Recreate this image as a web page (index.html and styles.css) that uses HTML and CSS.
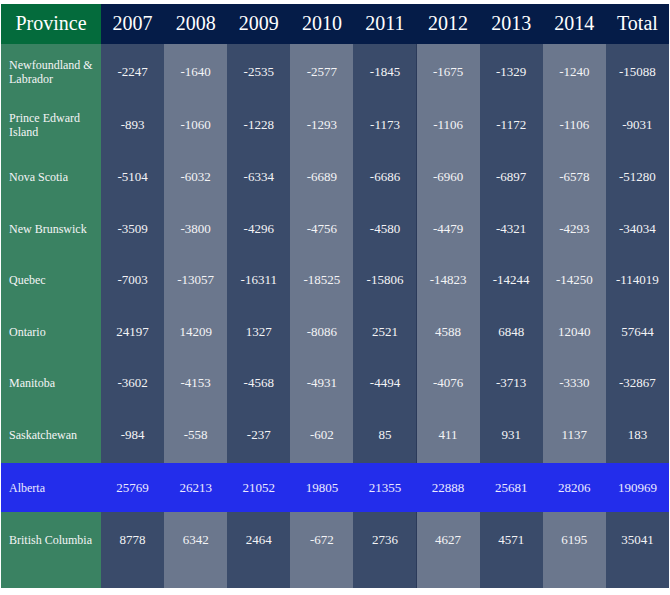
FILE: index.html
```html
<!DOCTYPE html>
<html lang="en">
<head>
<meta charset="utf-8">
<title>Interprovincial migration</title>
<link rel="stylesheet" href="styles.css">
</head>
<body>
<div class="table">
  <div class="row head">
    <div class="cell prov">Province</div>
    <div class="cell">2007</div><div class="cell">2008</div><div class="cell">2009</div><div class="cell">2010</div><div class="cell">2011</div><div class="cell">2012</div><div class="cell">2013</div><div class="cell">2014</div><div class="cell">Total</div>
  </div>
  <div class="row">
    <div class="cell prov"><span>Newfoundland &amp; Labrador</span></div>
    <div class="cell"><span>-2247</span></div><div class="cell"><span>-1640</span></div><div class="cell"><span>-2535</span></div><div class="cell"><span>-2577</span></div><div class="cell"><span>-1845</span></div><div class="cell"><span>-1675</span></div><div class="cell"><span>-1329</span></div><div class="cell"><span>-1240</span></div><div class="cell"><span>-15088</span></div>
  </div>
  <div class="row">
    <div class="cell prov"><span>Prince Edward Island</span></div>
    <div class="cell"><span>-893</span></div><div class="cell"><span>-1060</span></div><div class="cell"><span>-1228</span></div><div class="cell"><span>-1293</span></div><div class="cell"><span>-1173</span></div><div class="cell"><span>-1106</span></div><div class="cell"><span>-1172</span></div><div class="cell"><span>-1106</span></div><div class="cell"><span>-9031</span></div>
  </div>
  <div class="row">
    <div class="cell prov"><span>Nova Scotia</span></div>
    <div class="cell"><span>-5104</span></div><div class="cell"><span>-6032</span></div><div class="cell"><span>-6334</span></div><div class="cell"><span>-6689</span></div><div class="cell"><span>-6686</span></div><div class="cell"><span>-6960</span></div><div class="cell"><span>-6897</span></div><div class="cell"><span>-6578</span></div><div class="cell"><span>-51280</span></div>
  </div>
  <div class="row">
    <div class="cell prov"><span>New Brunswick</span></div>
    <div class="cell"><span>-3509</span></div><div class="cell"><span>-3800</span></div><div class="cell"><span>-4296</span></div><div class="cell"><span>-4756</span></div><div class="cell"><span>-4580</span></div><div class="cell"><span>-4479</span></div><div class="cell"><span>-4321</span></div><div class="cell"><span>-4293</span></div><div class="cell"><span>-34034</span></div>
  </div>
  <div class="row">
    <div class="cell prov"><span>Quebec</span></div>
    <div class="cell"><span>-7003</span></div><div class="cell"><span>-13057</span></div><div class="cell"><span>-16311</span></div><div class="cell"><span>-18525</span></div><div class="cell"><span>-15806</span></div><div class="cell"><span>-14823</span></div><div class="cell"><span>-14244</span></div><div class="cell"><span>-14250</span></div><div class="cell"><span>-114019</span></div>
  </div>
  <div class="row">
    <div class="cell prov"><span>Ontario</span></div>
    <div class="cell"><span>24197</span></div><div class="cell"><span>14209</span></div><div class="cell"><span>1327</span></div><div class="cell"><span>-8086</span></div><div class="cell"><span>2521</span></div><div class="cell"><span>4588</span></div><div class="cell"><span>6848</span></div><div class="cell"><span>12040</span></div><div class="cell"><span>57644</span></div>
  </div>
  <div class="row">
    <div class="cell prov"><span>Manitoba</span></div>
    <div class="cell"><span>-3602</span></div><div class="cell"><span>-4153</span></div><div class="cell"><span>-4568</span></div><div class="cell"><span>-4931</span></div><div class="cell"><span>-4494</span></div><div class="cell"><span>-4076</span></div><div class="cell"><span>-3713</span></div><div class="cell"><span>-3330</span></div><div class="cell"><span>-32867</span></div>
  </div>
  <div class="row">
    <div class="cell prov"><span>Saskatchewan</span></div>
    <div class="cell"><span>-984</span></div><div class="cell"><span>-558</span></div><div class="cell"><span>-237</span></div><div class="cell"><span>-602</span></div><div class="cell"><span>85</span></div><div class="cell"><span>411</span></div><div class="cell"><span>931</span></div><div class="cell"><span>1137</span></div><div class="cell"><span>183</span></div>
  </div>
  <div class="row highlight">
    <div class="cell prov"><span>Alberta</span></div>
    <div class="cell"><span>25769</span></div><div class="cell"><span>26213</span></div><div class="cell"><span>21052</span></div><div class="cell"><span>19805</span></div><div class="cell"><span>21355</span></div><div class="cell"><span>22888</span></div><div class="cell"><span>25681</span></div><div class="cell"><span>28206</span></div><div class="cell"><span>190969</span></div>
  </div>
  <div class="row">
    <div class="cell prov"><span>British Columbia</span></div>
    <div class="cell"><span>8778</span></div><div class="cell"><span>6342</span></div><div class="cell"><span>2464</span></div><div class="cell"><span>-672</span></div><div class="cell"><span>2736</span></div><div class="cell"><span>4627</span></div><div class="cell"><span>4571</span></div><div class="cell"><span>6195</span></div><div class="cell"><span>35041</span></div>
  </div>
</div>
</body>
</html>
```

FILE: styles.css
```css
html, body {
  margin: 0;
  padding: 0;
  background: #ffffff;
}

body {
  padding: 4px 0 0 1px;
  font-family: "Liberation Serif", "Times New Roman", serif;
  color: #f4f4f6;
}

.table {
  width: 668px;
  display: flex;
  flex-direction: column;
}

.row {
  display: grid;
  grid-template-columns: 100px repeat(9, 1fr);
  height: 52px;
}

.row:nth-child(2) { height: 53px; }
.row:nth-child(5) { height: 51px; }
.row:nth-child(7) { height: 51px; }
.row:nth-child(9) { height: 56px; }
.row:nth-child(11) { height: 76px; }

.cell {
  display: flex;
  justify-content: center;
  align-items: flex-start;
  font-size: 13px;
  line-height: 14px;
  min-width: 0;
}

.cell > span {
  height: 56px;
  display: flex;
  align-items: center;
  text-align: center;
}

.cell:nth-child(even) { background: #3a4b6a; }
.cell:nth-child(odd) { background: #6b778d; }
.cell:nth-child(6) { box-shadow: inset -1px 0 0 #2b3a5a; }

.cell.prov {
  background: #3a8262;
  justify-content: flex-start;
  padding: 0 4px 0 8px;
  font-size: 12px;
  text-align: left;
}

.cell.prov > span { text-align: left; }

.head {
  height: 40px;
}

.head .cell {
  background: #051c48;
  align-items: center;
  font-size: 20px;
  line-height: 24px;
  color: #ffffff;
  padding-bottom: 3px;
  box-shadow: none;
}

.head .cell.prov {
  background: #046b3c;
  justify-content: center;
  padding: 0 0 3px 0;
}

.highlight {
  height: 49px;
}

.highlight .cell,
.highlight .cell.prov {
  background: #232deb;
  box-shadow: none;
  color: #eceaff;
  align-items: center;
}

.highlight .cell > span {
  height: auto;
}
```
